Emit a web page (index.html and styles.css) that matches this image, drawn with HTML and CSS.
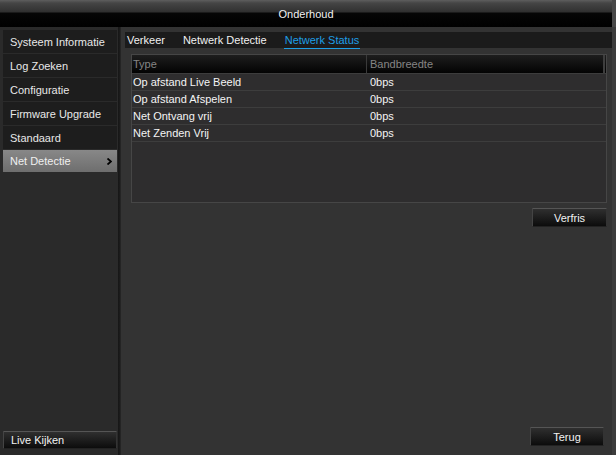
FILE: index.html
```html
<!DOCTYPE html>
<html>
<head>
<meta charset="utf-8">
<link rel="stylesheet" href="styles.css">
</head>
<body>
<div class="window">
  <div class="titlebar"><span class="title">Onderhoud</span></div>
  <div class="content">
    <nav class="sidebar">
      <div class="menu">
        <div class="menu-item">Systeem Informatie</div>
        <div class="menu-item">Log Zoeken</div>
        <div class="menu-item">Configuratie</div>
        <div class="menu-item">Firmware Upgrade</div>
        <div class="menu-item">Standaard</div>
        <div class="menu-item active">Net Detectie<svg class="chev" width="5" height="7" viewBox="0 0 5 7"><path d="M0.5 0.5 L4 3.5 L0.5 6.5"/></svg></div>
      </div>
      <div class="btn live">Live Kijken</div>
    </nav>
    <div class="divider"></div>
    <main class="main">
      <div class="tabbar">
        <span class="tab">Verkeer</span>
        <span class="tab">Netwerk Detectie</span>
        <span class="tab current">Netwerk Status</span>
      </div>
      <div class="table">
        <div class="thead">
          <div class="th c1">Type</div>
          <div class="th c2">Bandbreedte</div>
          <div class="th c3"></div>
        </div>
        <div class="row"><div class="td c1">Op afstand Live Beeld</div><div class="td c2">0bps</div></div>
        <div class="row"><div class="td c1">Op afstand Afspelen</div><div class="td c2">0bps</div></div>
        <div class="row"><div class="td c1">Net Ontvang vrij</div><div class="td c2">0bps</div></div>
        <div class="row"><div class="td c1">Net Zenden Vrij</div><div class="td c2">0bps</div></div>
      </div>
      <div class="actions">
        <div class="btn refresh">Verfris</div>
      </div>
      <div class="spacer"></div>
      <div class="footer">
        <div class="btn back">Terug</div>
      </div>
    </main>
    <div class="frame-right"></div>
  </div>
</div>
</body>
</html>
```

FILE: styles.css
```css
* { box-sizing: border-box; }
html, body {
  margin: 0;
  padding: 0;
  width: 616px;
  height: 455px;
  overflow: hidden;
  background: #333333;
  font-family: "Liberation Sans", Arial, sans-serif;
  font-size: 11px;
  color: #eeeeee;
}
.window {
  width: 616px;
  height: 455px;
  display: flex;
  flex-direction: column;
}
.titlebar {
  height: 27px;
  flex: none;
  display: flex;
  align-items: center;
  justify-content: center;
  padding-top: 1px;
  background: linear-gradient(to bottom, #5e5e5e 0, #454545 3px, #303030 12px, #060606 13px, #000000 27px);
  border-right: 4px solid #484848;
}
.title {
  color: #f2f2f2;
  font-size: 11px;
}
.content {
  flex: 1;
  display: flex;
  min-height: 0;
}
.sidebar {
  width: 118px;
  flex: none;
  background: #2a2a2a;
  padding: 3px 1px 6px 3px;
  display: flex;
  flex-direction: column;
  justify-content: space-between;
}
.menu {
  display: flex;
  flex-direction: column;
  gap: 1px;
}
.menu-item {
  height: 23px;
  background: #1d1d1d;
  padding-left: 7px;
  display: flex;
  align-items: center;
  justify-content: space-between;
  padding-right: 5px;
  color: #e8e8e8;
}
.menu-item.active {
  background: linear-gradient(to bottom, #888888, #6e6e6e);
  color: #f0f0f0;
  height: 22px;
}
.chev { display: block; }
.chev path {
  fill: none;
  stroke: #000000;
  stroke-width: 1.8;
}
.divider {
  width: 3px;
  flex: none;
  background: linear-gradient(to right, #161616, #1c1c1c 66%, #2c2c2c);
}
.main {
  flex: 1;
  display: flex;
  flex-direction: column;
  padding: 5px 0 9px 4px;
  background: #333333;
}
.frame-right {
  width: 4px;
  flex: none;
  background: #3c3c3c;
}
.tabbar {
  height: 16px;
  background: #1b1b1b;
  display: flex;
  align-items: center;
  gap: 18px;
  padding-left: 2px;
  color: #f0f0f0;
}
.tab { position: relative; }
.tab.current {
  color: #1e9fe6;
}
.tab.current::after {
  content: "";
  position: absolute;
  left: -1px;
  right: -1px;
  bottom: -3px;
  height: 1px;
  background: #1e9fe6;
}
.table {
  margin: 6px 5px 0 6px;
  height: 149px;
  border: 1px solid #464646;
  background: #2e2d2e;
  display: flex;
  flex-direction: column;
}
.thead {
  height: 19px;
  display: grid;
  grid-template-columns: 234px 1fr 3px;
  background: linear-gradient(to bottom, #1e1e1e, #030303);
  border-bottom: 1px solid #3c3c3c;
}
.th {
  color: #858585;
  display: flex;
  align-items: center;
}
.th.c1 { padding-left: 1px; }
.th.c2 {
  padding-left: 3px;
  border-left: 1px solid #3a3a3a;
}
.th.c3 {
  border-left: 2px solid #3e3e3e;
}
.row {
  height: 17px;
  display: grid;
  grid-template-columns: 235px 1fr;
  border-bottom: 1px solid #3d3d3d;
  color: #f4f4f4;
}
.td {
  display: flex;
  align-items: center;
}
.td.c1 { padding-left: 1px; }
.td.c2 { padding-left: 3px; }
.actions {
  display: flex;
  justify-content: flex-end;
  margin: 5px 5px 0 0;
}
.spacer { flex: 1; }
.footer {
  display: flex;
  justify-content: flex-end;
  margin-right: 8px;
}
.btn {
  background: linear-gradient(to bottom, #2f2f2f, #0c0c0c);
  border: 1px solid #4a4a4a;
  border-color: #555555 #333333 #222222 #444444;
  color: #f2f2f2;
  display: flex;
  align-items: center;
  border-radius: 1px;
}
.btn.refresh {
  width: 75px;
  height: 19px;
  justify-content: center;
}
.btn.back {
  width: 74px;
  height: 19px;
  justify-content: center;
}
.btn.live {
  height: 18px;
  padding-left: 7px;
}
```
